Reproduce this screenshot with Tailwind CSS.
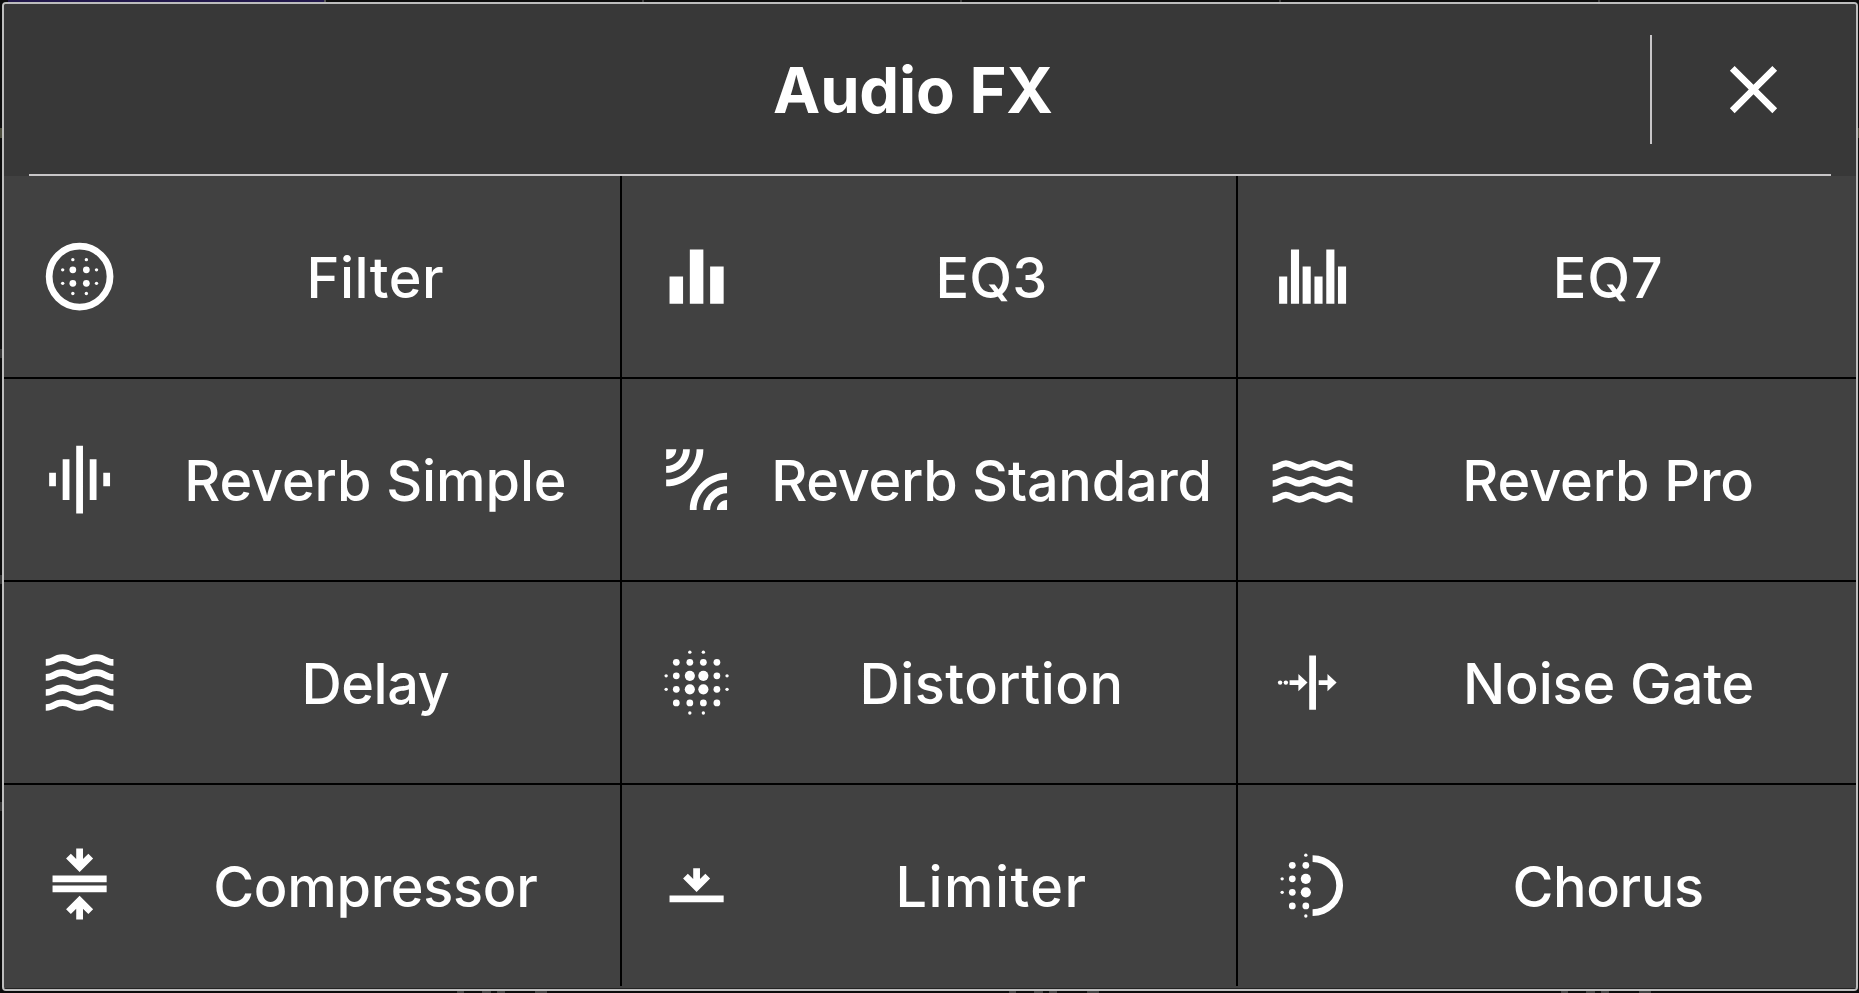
<!DOCTYPE html>
<html lang="en">
<head>
<meta charset="utf-8">
<title>Audio FX</title>
<script src="https://cdn.jsdelivr.net/npm/@tailwindcss/browser@4"></script>
</head>
<body class="relative h-screen overflow-hidden bg-[#0c0c0c] pt-[2px] pl-[2px] pr-px pb-[2px] font-['Inter',sans-serif] text-white">

<!-- Slivers of the mixer behind the dialog -->
<div class="absolute left-2 top-0 h-[2px] w-[316px] bg-[#22184c]"></div>
<div class="absolute left-[324px] top-0 h-[2px] w-[2px] bg-[#555]"></div>
<div class="absolute left-[642px] top-0 h-[2px] w-[2px] bg-[#3c3c3c]"></div>
<div class="absolute left-[960px] top-0 h-[2px] w-[2px] bg-[#3c3c3c]"></div>
<div class="absolute left-[1279px] top-0 h-[2px] w-[2px] bg-[#3c3c3c]"></div>
<div class="absolute left-[1598px] top-0 h-[2px] w-[2px] bg-[#3c3c3c]"></div>
<div class="absolute left-0 top-[128px] h-[10px] w-[2px] bg-[#4b4c3c]"></div>
<div class="absolute left-0 top-[349px] h-[9px] w-[2px] bg-[#333]"></div>
<div class="absolute left-0 top-[575px] h-[9px] w-[2px] bg-[#333]"></div>
<div class="absolute left-0 top-[802px] h-[9px] w-[2px] bg-[#333]"></div>
<div class="absolute right-0 top-[128px] h-[10px] w-px bg-[#4b4c3c]"></div>
<svg class="absolute bottom-0 left-0 h-[2px] w-[1859px]" viewBox="0 0 1859 2" fill="#444">
  <g id="peek"><rect x="457" width="7" height="2"/><rect x="482" width="9" height="2"/><rect x="497" width="8" height="2"/><rect x="535" width="12" height="2"/></g>
  <use href="#peek" x="552"/><use href="#peek" x="1104"/>
</svg>

<main class="relative flex h-full flex-col overflow-hidden rounded-[4px] border-2 border-[#bdbdbd] bg-[#414141]">
  <header class="flex h-[172px] shrink-0 flex-col bg-[#383838]">
    <div class="flex flex-1 items-center pt-px">
      <h1 class="flex-1 pt-[2px] pl-[172px] text-center text-[63.3px] leading-none font-bold tracking-[-0.2px]">Audio FX</h1>
      <div class="h-[109px] w-[2px] bg-[#c8c6c8]"></div>
      <button class="flex w-[204px] justify-center pr-px" aria-label="Close">
        <svg class="size-[81px]" viewBox="0 0 24 24" fill="currentColor"><path d="M19 6.41 17.59 5 12 10.59 6.41 5 5 6.41 10.59 12 5 17.59 6.41 19 12 13.41 17.59 19 19 17.59 13.41 12z"/></svg>
      </button>
    </div>
    <div class="mr-[25px] ml-[25px] h-[2px] bg-[#c8c6c8]"></div>
  </header>

  <section class="grid shrink-0 grid-cols-[616px_614px_618px] grid-rows-[repeat(4,201px)] gap-[2px] bg-black text-[55.8px] leading-none font-medium tracking-[-0.1px] whitespace-nowrap">
    <div class="flex items-center gap-[13px] bg-[#414141] pr-[2px] pl-[34.5px]">
      <svg class="size-[81.2px] shrink-0" viewBox="0 0 24 24" fill="currentColor">
        <circle cx="12" cy="12" r="9" fill="none" stroke="currentColor" stroke-width="2"/>
        <circle cx="10" cy="10" r="1"/><circle cx="14" cy="10" r="1"/><circle cx="10" cy="14" r="1"/><circle cx="14" cy="14" r="1"/>
        <circle cx="7" cy="10" r=".5"/><circle cx="7" cy="14" r=".5"/><circle cx="17" cy="10" r=".5"/><circle cx="17" cy="14" r=".5"/>
        <circle cx="10" cy="7" r=".5"/><circle cx="14" cy="7" r=".5"/><circle cx="10" cy="17" r=".5"/><circle cx="14" cy="17" r=".5"/>
      </svg>
      <span class="flex-1 pt-[2px] text-center tracking-[0.5px]">Filter</span>
    </div>
    <div class="flex items-center gap-[10px] bg-[#414141] pl-[33.8px]">
      <svg class="size-[81.2px] shrink-0" viewBox="0 0 24 24" fill="currentColor"><path d="M10 20h4V4h-4v16zm-6 0h4v-8H4v8zM16 9v11h4V9h-4z"/></svg>
      <span class="flex-1 pt-[2px] text-center tracking-[0.2px]">EQ3</span>
    </div>
    <div class="flex items-center gap-[10px] bg-[#414141] pr-[3px] pl-[34px]">
      <svg class="size-[81.2px] shrink-0" viewBox="0 0 24 24" fill="currentColor"><path d="M2.1 12h2.4v8H2.1zM5.6 4H8v16H5.6zM9.05 9h2.4v11h-2.4zM12.55 12h2.4v8h-2.4zM16.05 4h2.4v16h-2.4zM19.5 9h2.4v11h-2.4z"/></svg>
      <span class="flex-1 pt-[2px] text-center tracking-[0.8px]">EQ7</span>
    </div>

    <div class="flex items-center gap-[13px] bg-[#414141] pr-[2px] pl-[34.5px]">
      <svg class="size-[81.2px] shrink-0" viewBox="0 0 24 24" fill="currentColor"><path d="M7 18h2V6H7v12zm4 4h2V2h-2v20zm-8-8h2v-4H3v4zm12 4h2V6h-2v12zm4-8v4h2v-4h-2z"/></svg>
      <span class="flex-1 pt-[2px] text-center">Reverb Simple</span>
    </div>
    <div class="flex items-center gap-[10px] bg-[#414141] pl-[33.8px]">
      <svg class="size-[81.2px] shrink-0" viewBox="0 0 24 24" fill="currentColor"><path d="M6 3H3v3c1.66 0 3-1.34 3-3zm8 0h-2c0 4.97-4.03 9-9 9v2c6.08 0 11-4.93 11-11zm-4 0H8c0 2.76-2.24 5-5 5v2c3.87 0 7-3.13 7-7zm0 18h2c0-4.97 4.03-9 9-9v-2c-6.07 0-11 4.93-11 11zm8 0h3v-3c-1.66 0-3 1.34-3 3zm-4 0h2c0-2.76 2.24-5 5-5v-2c-3.87 0-7 3.13-7 7z"/></svg>
      <span class="flex-1 pt-[2px] text-center tracking-[-0.25px]">Reverb Standard</span>
    </div>
    <div class="flex items-center gap-[10px] bg-[#414141] pr-[3px] pl-[34px]">
      <svg class="size-[81.2px] shrink-0" viewBox="0 0 24 24" fill="none" stroke="currentColor" stroke-width="1.9">
        <path id="ripple" d="M.2 8.5c1.7 0 2.3-1.3 3.93-1.3s2.3 1.3 3.94 1.3 2.3-1.3 3.93-1.3 2.3 1.3 3.93 1.3 2.3-1.3 3.94-1.3 2.23 1.3 3.93 1.3"/>
        <use href="#ripple" y="4.68"/><use href="#ripple" y="9.36"/>
      </svg>
      <span class="flex-1 pt-[2px] text-center">Reverb Pro</span>
    </div>

    <div class="flex items-center gap-[13px] bg-[#414141] pr-[2px] pl-[34.5px]">
      <svg class="size-[81.2px] shrink-0" viewBox="0 0 24 24" fill="currentColor">
        <path id="wave" d="M17 16.99c-1.35 0-2.2.42-2.95.8-.65.33-1.18.6-2.05.6-.9 0-1.4-.25-2.05-.6-.75-.38-1.57-.8-2.95-.8s-2.2.42-2.95.8c-.65.33-1.17.6-2.05.6v1.95c1.35 0 2.2-.42 2.95-.8.65-.33 1.17-.6 2.05-.6s1.4.25 2.05.6c.75.38 1.57.8 2.95.8s2.2-.42 2.95-.8c.65-.33 1.18-.6 2.05-.6.9 0 1.4.25 2.05.6.75.38 1.58.8 2.95.8v-1.95c-.9 0-1.4-.25-2.05-.6-.75-.38-1.6-.8-2.95-.8z"/>
        <use href="#wave" y="-4.45"/><use href="#wave" y="-8.9"/><use href="#wave" y="-13.35"/>
      </svg>
      <span class="flex-1 pt-[2px] text-center tracking-[-0.5px]">Delay</span>
    </div>
    <div class="flex items-center gap-[10px] bg-[#414141] pl-[33.8px]">
      <svg class="size-[81.2px] shrink-0" viewBox="0 0 24 24" fill="currentColor">
        <g id="halfdots">
          <circle cx="3" cy="10" r=".5"/><circle cx="3" cy="14" r=".5"/>
          <circle cx="6" cy="6" r="1"/><circle cx="6" cy="10" r="1"/><circle cx="6" cy="14" r="1"/><circle cx="6" cy="18" r="1"/>
          <circle cx="10" cy="3" r=".5"/><circle cx="10" cy="6" r="1"/><circle cx="10" cy="10" r="1.5"/><circle cx="10" cy="14" r="1.5"/><circle cx="10" cy="18" r="1"/><circle cx="10" cy="21" r=".5"/>
        </g>
        <use href="#halfdots" transform="matrix(-1 0 0 1 24 0)"/>
      </svg>
      <span class="flex-1 pt-[2px] text-center tracking-[0.45px]">Distortion</span>
    </div>
    <div class="flex items-center gap-[10px] bg-[#414141] pr-[2px] pl-[34px]">
      <svg class="size-[81.2px] shrink-0" viewBox="0 0 24 24" fill="currentColor">
        <circle cx="2.4" cy="12" r=".65"/><circle cx="4.1" cy="12" r=".65"/>
        <path d="M11 4h2v16h-2zM5.2 11.3h2.6V9.45L10.5 12l-2.7 2.55V12.7H5.2zM13.8 11.3h2.6V9.45l2.7 2.55-2.7 2.55V12.7h-2.6z"/>
      </svg>
      <span class="flex-1 pt-[2px] text-center">Noise Gate</span>
    </div>

    <div class="flex items-center gap-[13px] bg-[#414141] pr-[2px] pl-[34.5px]">
      <svg class="size-[81.2px] shrink-0" viewBox="0 0 24 24" fill="currentColor"><path d="M4 9h16v2H4zM4 12h16v2H4zM13 4.17l1.59-1.58L16 4l-4 4-4-4 1.41-1.41L11 4.17V1h2zM11 18.83l-1.59 1.58L8 19l4-4 4 4-1.41 1.41L13 18.83V22h-2z"/></svg>
      <span class="flex-1 pt-[2px] text-center tracking-[-0.3px]">Compressor</span>
    </div>
    <div class="flex items-center gap-[10px] bg-[#414141] pl-[33.8px]">
      <svg class="size-[81.2px] shrink-0" viewBox="0 0 24 24" fill="currentColor"><path d="M4 14.9h16v2H4zM13 10.07l1.59-1.58L16 9.9l-4 4-4-4 1.41-1.41L11 10.07V6.9h2z"/></svg>
      <span class="flex-1 pt-[2px] text-center tracking-[1.4px]">Limiter</span>
    </div>
    <div class="flex items-center gap-[10px] bg-[#414141] pr-[3px] pl-[34px]">
      <svg class="size-[81.2px] shrink-0" viewBox="0 0 24 24" fill="currentColor">
        <use href="#halfdots"/>
        <path d="M12 3a9 9 0 0 1 0 18v-2a7 7 0 0 0 0-14z"/>
      </svg>
      <span class="flex-1 pt-[2px] text-center tracking-[-0.4px]">Chorus</span>
    </div>
  </section>
  <div class="mt-[2px] h-px shrink-0 bg-[#222]"></div>
</main>
</body>
</html>
